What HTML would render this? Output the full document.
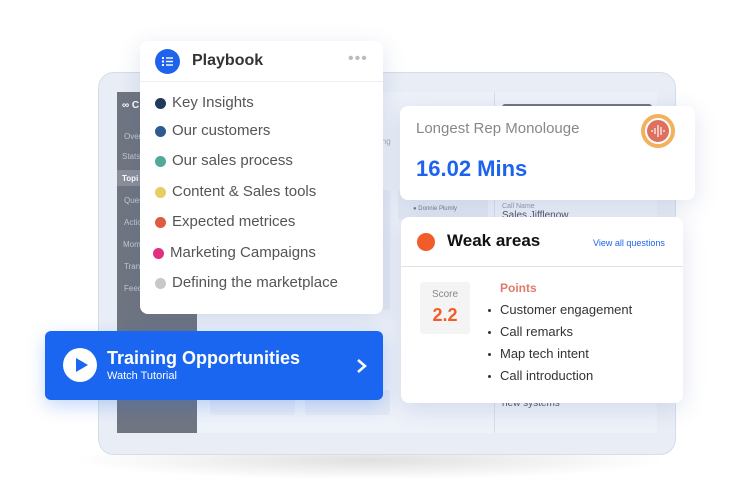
<!DOCTYPE html>
<html><head><style>
*{margin:0;padding:0;box-sizing:border-box}
body{width:741px;height:504px;background:#fff;position:relative;overflow:hidden;font-family:"Liberation Sans",sans-serif}
.a{position:absolute}
.card{position:absolute;background:#fff;border-radius:8px;box-shadow:0 6px 24px rgba(60,90,160,.16)}
.it{position:absolute;left:32px;font-size:15px;color:#555}
.it i{position:absolute;left:-17px;top:4px;width:11px;height:11px;border-radius:50%}
.side{position:absolute;left:6px;font-size:8px;color:#c4c8d0}
.b{position:absolute;left:87px;font-size:13px;color:#333}
.b:before{content:"";position:absolute;left:-12px;top:7px;width:3px;height:3px;background:#333;border-radius:50%}
.tile{position:absolute;background:#e4eaf4;border-radius:3px}
</style></head><body>
<div class="a" style="left:70px;top:440px;width:600px;height:40px;border-radius:50%;background:radial-gradient(ellipse,rgba(0,0,0,.12),rgba(0,0,0,0) 70%)"></div>
<div class="a" style="left:98px;top:72px;width:578px;height:383px;border-radius:16px;background:#e9eef6;border:1px solid #d6dde8"></div>
<div class="a" style="left:117px;top:92px;width:540px;height:341px;background:#eef2f9"></div>
<div class="a" style="left:117px;top:92px;width:80px;height:341px;background:#6f7581"></div>
<div class="a" style="left:117px;top:170px;width:80px;height:16px;background:#8a8f99"></div>
<div class="side" style="left:122px;top:100px;color:#fff;font-weight:bold;font-size:10px">∞ C</div>
<div class="side" style="left:124px;top:132px">Over</div>
<div class="side" style="left:122px;top:152px">Stats</div>
<div class="side" style="left:122px;top:174px;color:#fff;font-weight:bold">Topi</div>
<div class="side" style="left:124px;top:196px">Ques</div>
<div class="side" style="left:124px;top:218px">Actio</div>
<div class="side" style="left:123px;top:240px">Mom</div>
<div class="side" style="left:124px;top:262px">Tran</div>
<div class="side" style="left:124px;top:284px">Feed</div>
<div class="a" style="left:494px;top:92px;width:1px;height:341px;background:#d8dfea"></div>
<div class="a" style="left:502px;top:104px;width:150px;height:8px;background:#6f7581;border-radius:3px"></div>
<div class="tile" style="left:210px;top:190px;width:85px;height:120px"></div>
<div class="tile" style="left:305px;top:190px;width:85px;height:120px"></div>
<div class="tile" style="left:398px;top:190px;width:90px;height:30px"></div>
<div class="tile" style="left:210px;top:390px;width:85px;height:25px"></div>
<div class="tile" style="left:305px;top:390px;width:85px;height:25px"></div>
<div class="a" style="left:413px;top:206px;font-size:6px;color:#778">● Donnie Plumly</div>
<div class="a" style="left:502px;top:203px;font-size:7px;color:#99a">Call Name</div>
<div class="a" style="left:502px;top:210px;font-size:10px;color:#556">Sales Jifflenow</div>
<div class="a" style="left:502px;top:398px;font-size:10px;color:#556">new systems</div>
<div class="a" style="left:380px;top:137px;font-size:8px;color:#aab">ing</div>

<div class="card" style="left:140px;top:41px;width:243px;height:273px">
 <div class="a" style="left:15px;top:8px;width:25px;height:25px;border-radius:50%;background:#1d63ee"></div>
 <svg class="a" style="left:21px;top:14px" width="13" height="13" viewBox="0 0 13 13" fill="#fff"><rect x="1" y="2" width="2" height="2"/><rect x="5" y="2.3" width="7" height="1.4"/><rect x="1" y="5.5" width="2" height="2"/><rect x="5" y="5.8" width="7" height="1.4"/><rect x="1" y="9" width="2" height="2"/><rect x="5" y="9.3" width="7" height="1.4"/></svg>
 <div class="a" style="left:52px;top:11px;font-size:16px;font-weight:bold;color:#333">Playbook</div>
 <div class="a" style="left:208px;top:9px;font-size:16px;color:#bbb;letter-spacing:1px">•••</div>
 <div class="a" style="left:0;top:40px;width:243px;height:1px;background:#eee"></div>
 <div class="it" style="top:53px"><i style="background:#1f3a5c"></i>Key Insights</div>
 <div class="it" style="top:81px"><i style="background:#2e5b8f"></i>Our customers</div>
 <div class="it" style="top:111px"><i style="background:#54a89a"></i>Our sales process</div>
 <div class="it" style="top:142px"><i style="background:#e8cd63"></i>Content &amp; Sales tools</div>
 <div class="it" style="top:172px"><i style="background:#dd5b3e"></i>Expected metrices</div>
 <div class="it" style="top:203px;left:30px"><i style="background:#e0307f"></i>Marketing Campaigns</div>
 <div class="it" style="top:233px"><i style="background:#c8c8c8"></i>Defining the marketplace</div>
</div>

<div class="a" style="left:45px;top:331px;width:338px;height:69px;background:#1a66f0;border-radius:6px;box-shadow:0 6px 18px rgba(26,102,240,.25)">
 <div class="a" style="left:18px;top:17px;width:34px;height:34px;border-radius:50%;background:#fff"></div>
 <svg class="a" style="left:30px;top:26px" width="14" height="16"><path d="M1 1 L13 8 L1 15Z" fill="#1a66f0"/></svg>
 <div class="a" style="left:62px;top:17px;font-size:18px;font-weight:bold;color:#fff">Training Opportunities</div>
 <div class="a" style="left:62px;top:39px;font-size:11px;color:#fff">Watch Tutorial</div>
 <svg class="a" style="left:311px;top:27px" width="12" height="16"><path d="M2 2 L9 8 L2 14" stroke="#fff" stroke-width="2.5" fill="none"/></svg>
</div>

<div class="card" style="left:400px;top:106px;width:295px;height:94px">
 <div class="a" style="left:16px;top:14px;font-size:15px;color:#888">Longest Rep Monolouge</div>
 <div class="a" style="left:16px;top:50px;font-size:22px;font-weight:bold;color:#1d63ee">16.02 Mins</div>
 <div class="a" style="left:241px;top:8px;width:34px;height:34px;border-radius:50%;background:#f2b15f"></div>
 <div class="a" style="left:245px;top:12px;width:26px;height:26px;border-radius:50%;background:#df6f5e;border:2px solid #fff"></div>
 <svg class="a" style="left:250px;top:18px" width="16" height="14" stroke="#fff" stroke-width="1.2"><path d="M2 6v2M5 4v6M8 1v12M11 3v8M14 6v2"/></svg>
</div>

<div class="card" style="left:401px;top:217px;width:282px;height:186px">
 <div class="a" style="left:16px;top:16px;width:18px;height:18px;border-radius:50%;background:#f25c2a"></div>
 <div class="a" style="left:46px;top:14px;font-size:17px;font-weight:bold;color:#111">Weak areas</div>
 <div class="a" style="left:192px;top:21px;font-size:9px;color:#1d63ee">View all questions</div>
 <div class="a" style="left:0;top:49px;width:282px;height:1px;background:#e2e2e2"></div>
 <div class="a" style="left:19px;top:65px;width:50px;height:52px;background:#f4f4f4;border-radius:3px"></div>
 <div class="a" style="left:19px;top:72px;width:50px;text-align:center;font-size:10px;color:#888">Score</div>
 <div class="a" style="left:19px;top:88px;width:50px;text-align:center;font-size:18px;font-weight:bold;color:#f25c2a">2.2</div>
 <div class="a" style="left:99px;top:64px;font-size:12px;font-weight:bold;color:#e07a6a">Points</div>
 <div class="b" style="left:99px;top:85px">Customer engagement</div>
 <div class="b" style="left:99px;top:107px">Call remarks</div>
 <div class="b" style="left:99px;top:129px">Map tech intent</div>
 <div class="b" style="left:99px;top:151px">Call introduction</div>
</div>
</body></html>
